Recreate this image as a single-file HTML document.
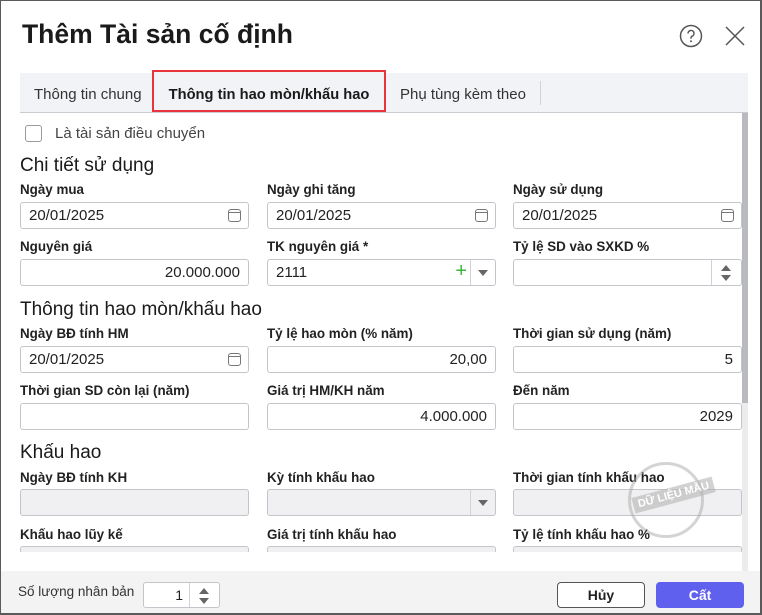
<!DOCTYPE html>
<html><head><meta charset="utf-8"><style>
*{box-sizing:border-box;margin:0;padding:0}
body{width:762px;height:615px;overflow:hidden;background:#fff;font-family:"Liberation Sans",Arial,sans-serif;color:#1f1f1f;position:relative}
.win{position:absolute;left:0;top:0;width:762px;height:615px;border:1px solid #5a5a5a;border-right-width:2px;border-bottom-width:2px}
.abs{position:absolute;white-space:nowrap}
.title{left:22px;top:19px;font-size:26.5px;font-weight:bold;color:#1a1a1a}
.tabs{left:20px;top:73px;width:728px;height:40px;background:#f2f3f6;border-bottom:1px solid #c9cbd0}
.tab{position:absolute;top:0;height:39px;line-height:44px;font-size:15px;color:#333}
.lbl{font-size:13.4px;font-weight:bold;color:#222}
.inp{height:27px;border:1px solid #c3c5ca;border-radius:3px;background:#fff;font-size:15px;line-height:25px;padding:0 8px;color:#222}
.dis{background:#f0f0f2}
.r{text-align:right}
.sec{font-size:19px;color:#1a1a1a}
.cal{position:absolute;right:7px;top:6px;width:13px;height:13px;border:1.3px solid #777;border-radius:3px}
.cal:before{content:"";position:absolute;left:-1px;right:-1px;top:2px;border-top:1.3px solid #777}
.sep{position:absolute;top:0;bottom:0;width:1px;background:#d0d2d6}
.dn{position:absolute;width:0;height:0;border-left:5px solid transparent;border-right:5px solid transparent;border-top:6px solid #666}
.up{position:absolute;width:0;height:0;border-left:5px solid transparent;border-right:5px solid transparent;border-bottom:6px solid #666}
</style></head><body>
<div class="win"></div>
<div class="abs title">Thêm Tài sản cố định</div>
<svg class="abs" style="left:679px;top:24px" width="24" height="24" viewBox="0 0 24 24"><circle cx="12" cy="12" r="10.5" fill="none" stroke="#555" stroke-width="1.5"/><path d="M9 9.5a3 3 0 1 1 4.2 2.7c-.8.4-1.2 1-1.2 1.8v.6" fill="none" stroke="#555" stroke-width="1.5"/><circle cx="12" cy="17.3" r="1" fill="#555"/></svg>
<svg class="abs" style="left:724px;top:25px" width="22" height="22" viewBox="0 0 22 22"><path d="M2 2L20 20M20 2L2 20" stroke="#555" stroke-width="1.5"/></svg>
<div class="abs tabs">
<div class="tab" style="left:14px">Thông tin chung</div>
<div class="tab" style="left:380px">Phụ tùng kèm theo</div>
<div class="abs" style="left:520px;top:8px;width:1px;height:24px;background:#d0d2d6"></div>
</div>
<div class="abs" style="left:152px;top:70px;width:234px;height:42px;border:2px solid #e8353b;background:#f2f3f6;font-size:14.7px;font-weight:bold;text-align:center;color:#1a1a1a;line-height:46px">Thông tin hao mòn/khấu hao</div>
<div class="abs" style="left:742px;top:113px;width:6px;height:458px;background:#ececec"></div>
<div class="abs" style="left:742px;top:113px;width:6px;height:290px;background:#b8babe"></div>

<div class="abs" style="left:25px;top:125px;width:17px;height:17px;border:1px solid #999;border-radius:3px"></div>
<div class="abs" style="left:55px;top:125px;font-size:15px;color:#444">Là tài sản điều chuyển</div>

<div class="abs sec" style="left:20px;top:155px">Chi tiết sử dụng</div>
<div class="abs lbl" style="left:20px;top:182px">Ngày mua</div>
<div class="abs lbl" style="left:267px;top:182px">Ngày ghi tăng</div>
<div class="abs lbl" style="left:513px;top:182px">Ngày sử dụng</div>
<div class="abs inp" style="left:20px;top:202px;width:229px">20/01/2025<span class="cal"></span></div>
<div class="abs inp" style="left:267px;top:202px;width:229px">20/01/2025<span class="cal"></span></div>
<div class="abs inp" style="left:513px;top:202px;width:229px">20/01/2025<span class="cal"></span></div>

<div class="abs lbl" style="left:20px;top:239px">Nguyên giá</div>
<div class="abs lbl" style="left:267px;top:239px">TK nguyên giá *</div>
<div class="abs lbl" style="left:513px;top:239px">Tỷ lệ SD vào SXKD %</div>
<div class="abs inp r" style="left:20px;top:259px;width:229px">20.000.000</div>
<div class="abs inp" style="left:267px;top:259px;width:229px">2111<span style="position:absolute;right:28px;top:-1px;color:#3db33d;font-size:20px">+</span><span class="sep" style="right:24px"></span><span class="dn" style="right:7px;top:10px"></span></div>
<div class="abs inp" style="left:513px;top:259px;width:229px"><span class="sep" style="right:29px"></span><span class="up" style="right:10px;top:5px"></span><span class="dn" style="right:10px;top:15px"></span></div>

<div class="abs sec" style="left:20px;top:299px">Thông tin hao mòn/khấu hao</div>
<div class="abs lbl" style="left:20px;top:326px">Ngày BĐ tính HM</div>
<div class="abs lbl" style="left:267px;top:326px">Tỷ lệ hao mòn (% năm)</div>
<div class="abs lbl" style="left:513px;top:326px">Thời gian sử dụng (năm)</div>
<div class="abs inp" style="left:20px;top:346px;width:229px">20/01/2025<span class="cal"></span></div>
<div class="abs inp r" style="left:267px;top:346px;width:229px">20,00</div>
<div class="abs inp r" style="left:513px;top:346px;width:229px">5</div>

<div class="abs lbl" style="left:20px;top:383px">Thời gian SD còn lại (năm)</div>
<div class="abs lbl" style="left:267px;top:383px">Giá trị HM/KH năm</div>
<div class="abs lbl" style="left:513px;top:383px">Đến năm</div>
<div class="abs inp" style="left:20px;top:403px;width:229px"></div>
<div class="abs inp r" style="left:267px;top:403px;width:229px">4.000.000</div>
<div class="abs inp r" style="left:513px;top:403px;width:229px">2029</div>

<div class="abs sec" style="left:20px;top:442px">Khấu hao</div>
<div class="abs lbl" style="left:20px;top:470px">Ngày BĐ tính KH</div>
<div class="abs lbl" style="left:267px;top:470px">Kỳ tính khấu hao</div>
<div class="abs lbl" style="left:513px;top:470px">Thời gian tính khấu hao</div>
<div class="abs inp dis" style="left:20px;top:489px;width:229px"></div>
<div class="abs inp dis" style="left:267px;top:489px;width:229px"><span class="sep" style="right:24px"></span><span class="dn" style="right:7px;top:10px"></span></div>
<div class="abs inp dis" style="left:513px;top:489px;width:229px"></div>
<div class="abs" style="left:628px;top:462px;width:76px;height:76px;border:3px solid rgba(170,170,170,.5);border-radius:50%"></div>
<div class="abs" style="left:632px;top:487px;transform:rotate(-15deg);background:rgba(180,180,180,.6);color:#fff;font-size:11px;font-weight:bold;padding:2px 5px">DỮ LIỆU MẪU</div>

<div class="abs lbl" style="left:20px;top:527px">Khấu hao lũy kế</div>
<div class="abs lbl" style="left:267px;top:527px">Giá trị tính khấu hao</div>
<div class="abs lbl" style="left:513px;top:527px">Tỷ lệ tính khấu hao %</div>
<div class="abs inp dis" style="left:20px;top:546px;width:229px;height:8px;border-bottom:none"></div>
<div class="abs inp dis" style="left:267px;top:546px;width:229px;height:8px;border-bottom:none"></div>
<div class="abs inp dis" style="left:513px;top:546px;width:229px;height:8px;border-bottom:none"></div>
<div class="abs" style="left:1px;top:552px;width:741px;height:19px;background:#fff"></div>

<div class="abs" style="left:1px;top:571px;width:759px;height:42px;background:#f3f3f3"></div>
<div class="abs" style="left:18px;top:584px;font-size:13.5px;color:#333">Số lượng nhân bản</div>
<div class="abs inp r" style="left:143px;top:582px;width:77px;height:26px;padding-right:36px;font-size:14px">1<span class="sep" style="right:29px"></span><span class="up" style="right:10px;top:5px"></span><span class="dn" style="right:10px;top:15px"></span></div>
<div class="abs" style="left:557px;top:582px;width:88px;height:26px;border:1px solid #555;border-radius:4px;background:#fff;text-align:center;line-height:24px;font-size:14px;font-weight:bold;color:#222">Hủy</div>
<div class="abs" style="left:656px;top:582px;width:88px;height:26px;border-radius:4px;background:#6060ee;text-align:center;line-height:26px;font-size:14px;font-weight:bold;color:#fff">Cất</div>
</body></html>
